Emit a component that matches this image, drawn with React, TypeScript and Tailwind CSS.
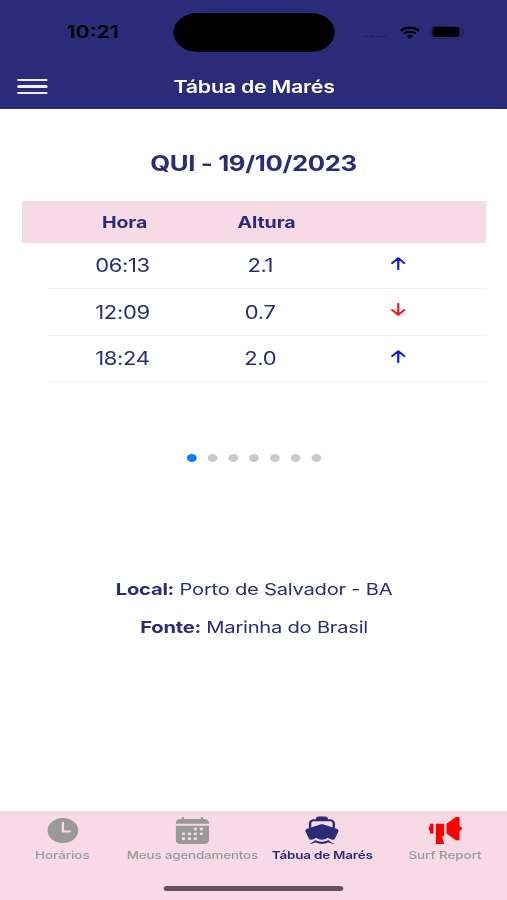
import { IoTime, IoCalendar, IoBoat, IoMegaphoneSharp } from 'react-icons/io5';

const tides = [
  { hour: '06:13', height: '2.1', rising: true },
  { hour: '12:09', height: '0.7', rising: false },
  { hour: '18:24', height: '2.0', rising: true },
];

const days = [0, 1, 2, 3, 4, 5, 6];

function TideArrow({ rising }: { rising: boolean }) {
  return (
    <svg
      viewBox="0 0 12 13"
      className={rising ? 'w-3 h-[13px] text-[#1414e6]' : 'w-3 h-[13px] text-[#f01414] rotate-180'}
      fill="none"
      stroke="currentColor"
      strokeWidth="1.8"
      strokeLinecap="round"
      strokeLinejoin="round"
    >
      <path d="M1 6.1 6 1.2l5 4.9M6 1.4v10.8" />
    </svg>
  );
}

function StatusBar() {
  return (
    <div className="flex h-16 items-center text-black">
      <span className="ml-[54.5px] w-[87.5px] text-[17.5px] font-semibold">10:21</span>
      <div className="h-[39px] w-[132px] rounded-full bg-black" />
      <div className="ml-[24px] mt-2 flex w-[19px] gap-[2px] opacity-30">
        <span className="h-px w-[3px] bg-black" />
        <span className="h-px w-[3px] bg-black" />
        <span className="h-px w-[3px] bg-black" />
        <span className="h-px w-[3px] bg-black" />
      </div>
      <svg viewBox="0 0 17 13" className="ml-[9.5px] h-[13px] w-[17px]" fill="none" stroke="currentColor">
        <path d="M1 4.6a10.7 10.7 0 0 1 15 0M3.8 7.5a6.8 6.8 0 0 1 9.4 0" strokeWidth="2.2" />
        <path d="M8.5 12.7 5.9 10a3.8 3.8 0 0 1 5.2 0z" fill="currentColor" stroke="none" />
      </svg>
      <div className="ml-[8px] flex h-[13px] w-[26px] items-center justify-center rounded-[4px] border border-black/25">
        <div className="h-[10px] w-[22px] rounded-[2.5px] bg-black" />
      </div>
      <div className="ml-px h-1 w-[1.5px] rounded-r-full bg-black/40" />
    </div>
  );
}

function Header() {
  return (
    <header className="h-[109px] bg-[#2a2c79]">
      <StatusBar />
      <div className="flex h-[45px] items-center">
        <button className="ml-[14px] flex w-[25px] flex-col gap-[4px]">
          <span className="h-[2.3px] w-full rounded-full bg-[#eeeefa]" />
          <span className="h-[2.3px] w-full rounded-full bg-[#eeeefa]" />
          <span className="h-[2.3px] w-full rounded-full bg-[#eeeefa]" />
        </button>
        <h1 className="flex-1 pr-[38px] pt-px text-center text-[17.5px] font-semibold tracking-[-0.2px] text-white">
          Tábua de Marés
        </h1>
      </div>
    </header>
  );
}

function TideTable() {
  return (
    <section className="pl-[17.5px] pr-[17px]">
      <div className="flex h-[42px] items-center bg-[#f8dae6] text-[16px] font-bold">
        <span className="ml-[66px] w-[111px] tracking-[-0.1px]">Hora</span>
        <span className="tracking-[-0.1px]">Altura</span>
      </div>
      <div className="ml-[21.5px]">
        {tides.map((tide) => (
          <div
            key={tide.hour}
            className="flex h-[46.5px] items-center border-b border-[#f1f1f3] text-[18px] tracking-[-0.3px]"
          >
            <span className="ml-[39px] w-[111px] pt-px">{tide.hour}</span>
            <span className="w-[48px] pt-px text-center">{tide.height}</span>
            <span className="ml-[82.5px] pb-[4px]">
              <TideArrow rising={tide.rising} />
            </span>
          </div>
        ))}
      </div>
    </section>
  );
}

function TabBar() {
  return (
    <nav className="h-[89px] bg-[#f8dae6] text-[11px] font-medium tracking-[-0.05px] text-[#999]">
      <div className="flex h-[75px] pt-[3.5px]">
        <div className="flex w-[102px] flex-col items-center">
          <IoTime className="size-[31px]" />
          <span className="mt-px">Horários</span>
        </div>
        <div className="flex w-[111px] flex-col items-center">
          <IoCalendar className="size-[31px]" />
          <span className="mt-px whitespace-nowrap tracking-[-0.16px]">Meus agendamentos</span>
        </div>
        <div className="flex w-[101.5px] flex-col items-center text-[#2a2c79]">
          <IoBoat className="size-[31px]" />
          <span className="mt-px whitespace-nowrap font-semibold tracking-[-0.16px]">Tábua de Marés</span>
        </div>
        <div className="flex w-[99.5px] flex-col items-center">
          <IoMegaphoneSharp className="size-[31px] text-[#ff0000]" />
          <span className="mt-px">Surf Report</span>
        </div>
      </div>
      <div className="mx-auto h-[5px] w-[147px] rounded-full bg-[#67515c]" />
    </nav>
  );
}

export default function App() {
  return (
    <div className="h-[900px] w-[507px] overflow-hidden bg-white">
      {/* anamorphic screen: 415 units wide, stretched over the full width */}
      <div className="flex h-[900px] w-[415px] origin-left scale-x-[1.2217] flex-col font-['Inter',sans-serif] text-[#2a2c79]">
        <Header />
        <main className="flex-1">
          <h2 className="mt-[39px] h-[52.5px] text-center text-[21px] font-bold leading-[32px] tracking-[-0.3px]">
            QUI - 19/10/2023
          </h2>
          <TideTable />
          <div className="mt-[72px] flex justify-center gap-[8.9px] pl-px">
            {days.map((day) => (
              <span
                key={day}
                className={day === 0 ? 'size-[8px] rounded-full bg-[#0a7aff]' : 'size-[8px] rounded-full bg-[#cbcbcb]'}
              />
            ))}
          </div>
          <div className="mt-[107.5px] pl-px text-center text-[16.5px] leading-[38px] tracking-[-0.2px]">
            <p>
              <b>Local:</b> Porto de Salvador - BA
            </p>
            <p>
              <b>Fonte:</b> Marinha do Brasil
            </p>
          </div>
        </main>
        <TabBar />
      </div>
    </div>
  );
}
